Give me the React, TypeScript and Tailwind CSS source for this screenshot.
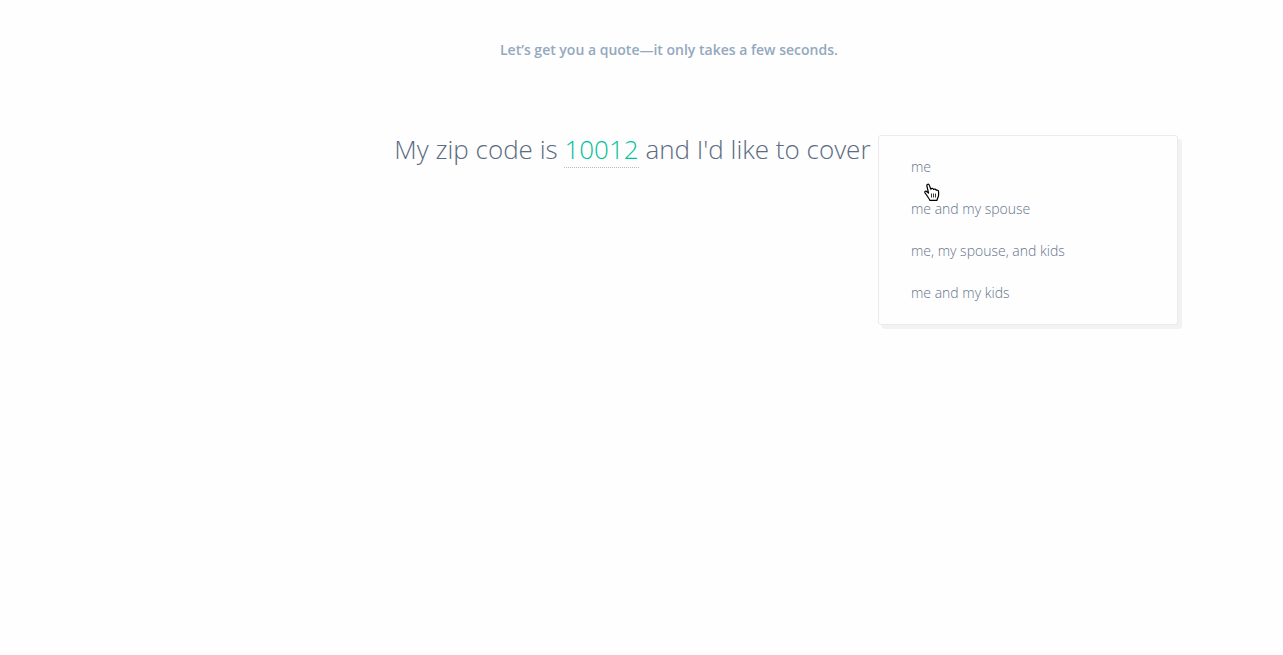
const options = ["me", "me and my spouse", "me, my spouse, and kids", "me and my kids"];

const Pointer = () => (
  <svg className="absolute left-[924px] top-[183px]" width="17" height="20" viewBox="0 0 17 20">
    <path
      d="M4.5 10L2.9 3C2.5 1 4.8 0.5 5.4 2.4L6.8 6.2C7.4 5 9.2 5.2 9.6 6.5C10.2 5.7 11.8 6.1 12.2 7.3C13.1 6.6 14.6 7.4 14.6 8.8V11.8C14.6 14.3 13.2 15.3 13 17.3H5.8C5.4 15.8 3.6 14 2.6 12L1 9.8C0.3 8.4 1.8 7.6 3 8.7Z"
      fill="white"
      stroke="black"
      strokeWidth="1.2"
      strokeLinejoin="round"
    />
    <path d="M7.5 10.5V14.5M9.5 10.5V14.5M11.5 10.5V14.5" stroke="black" strokeWidth="0.8" />
  </svg>
);

const App = () => {
  return (
    <div className="relative h-screen overflow-hidden bg-[#fefefe] font-['Open_Sans',sans-serif]">
      <p className="pl-[500px] pt-10 text-sm font-semibold text-[#94a8be]">
        Let’s get you a quote—it only takes a few seconds.
      </p>
      <div className="mt-[69px] flex items-start pl-[394.3px]">
        <h1 className="w-[476px] whitespace-nowrap text-[26px] font-light leading-10 text-[#5b6b80]">
          My zip code is{" "}
          <span className="border-b border-dotted border-[#bbb] text-[#00c297]">10012</span> and
          I'd like to cover
        </h1>
        <ul className="ml-[7.7px] mt-1.5 h-[190px] w-[300px] rounded-[3px] border border-[#ebebed] bg-[#fefefe] py-[10px] pl-8 text-sm font-light text-[#64748b] shadow-[4px_4px_0_#f2f2f3]">
          {options.map((option) => (
            <li key={option} className="h-[42px] leading-[42px]">
              {option}
            </li>
          ))}
        </ul>
      </div>
      <Pointer />
    </div>
  );
};

export default App;
